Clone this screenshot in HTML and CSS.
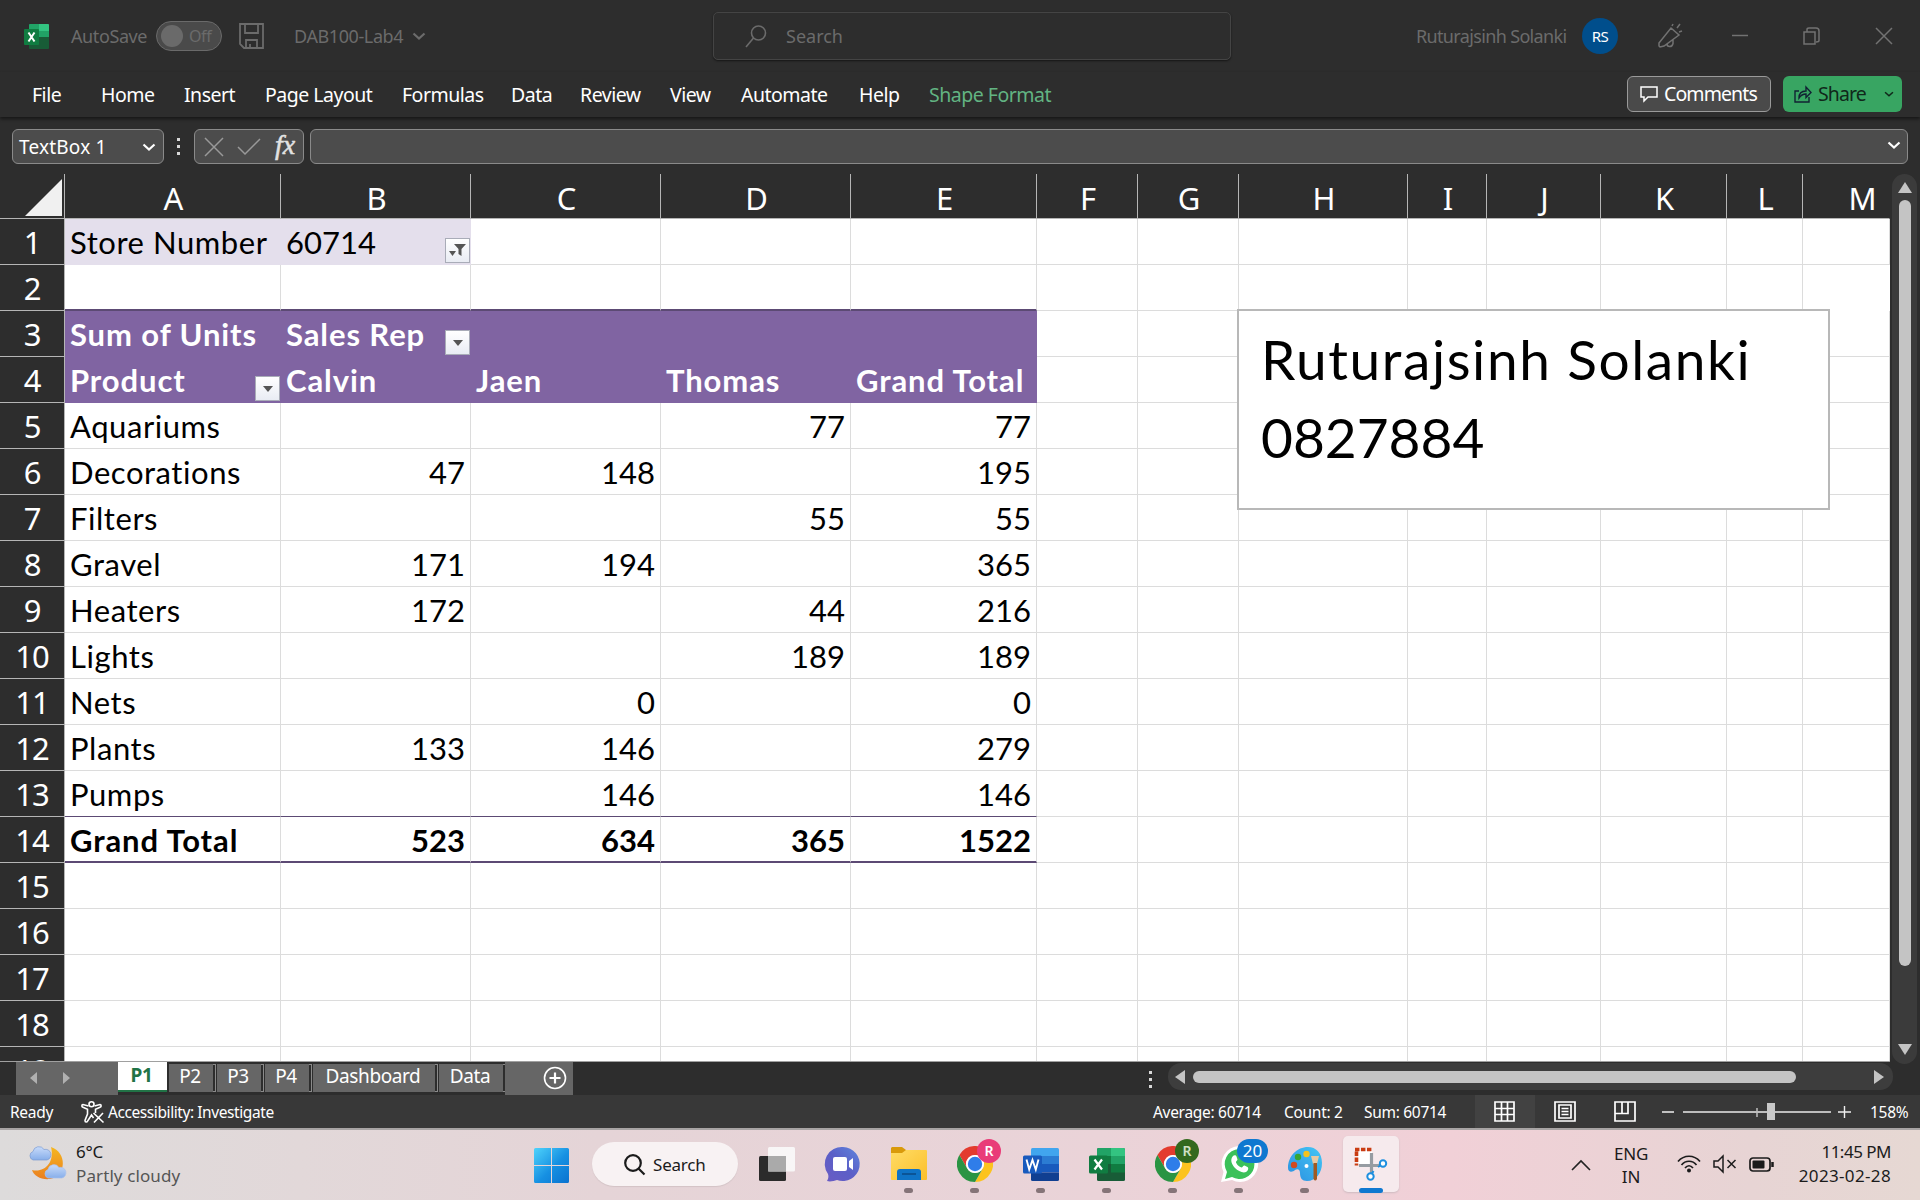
FILE: index.html
```html
<!DOCTYPE html>
<html lang="en">
<head>
<meta charset="utf-8">
<title>DAB100-Lab4 - Excel</title>
<link rel="stylesheet" href="styles.css">
</head>
<body>
<svg width="0" height="0" class="defs" aria-hidden="true">
  <defs>
    <linearGradient id="win" x1="0" y1="0" x2="1" y2="1"><stop offset="0" stop-color="#4fd3fb"/><stop offset=".55" stop-color="#1690e2"/><stop offset="1" stop-color="#0a72cf"/></linearGradient>
    <linearGradient id="moon" x1="0" y1="0" x2="0" y2="1"><stop offset="0" stop-color="#f5b71f"/><stop offset="1" stop-color="#ea7f22"/></linearGradient>
    <linearGradient id="cloud" x1="0" y1="0" x2="0" y2="1"><stop offset="0" stop-color="#c9dcfa"/><stop offset="1" stop-color="#87aeea"/></linearGradient>
    <linearGradient id="chat" x1="1" y1="0" x2="0" y2="1"><stop offset="0" stop-color="#5f86dd"/><stop offset=".5" stop-color="#5b5fc7"/><stop offset="1" stop-color="#6a5cc4"/></linearGradient>
    <linearGradient id="folder" x1="0" y1="0" x2="1" y2="1"><stop offset="0" stop-color="#ffdc66"/><stop offset="1" stop-color="#fbbf2a"/></linearGradient>
    <linearGradient id="paint" x1="0" y1="1" x2="1" y2="0"><stop offset="0" stop-color="#2a8fe0"/><stop offset="1" stop-color="#45c6f5"/></linearGradient>
    <symbol id="chrome" viewBox="0 0 36 36">
      <path d="M2.4 9A18 18 0 0 1 33.6 9H18a9 9 0 0 0-7.8 13.5z" fill="#e33b2e"/>
      <path d="M33.6 9A18 18 0 0 1 18 36l7.8-13.5A9 9 0 0 0 18 9z" fill="#fcc31e"/>
      <path d="M18 36A18 18 0 0 1 2.4 9l7.8 13.5A9 9 0 0 0 25.8 22.500z" fill="#2a9443"/>
      <circle cx="18" cy="18" r="9" fill="#fff"/><circle cx="18" cy="18" r="7.200" fill="#2f7de9"/>
    </symbol>
    <symbol id="chev" viewBox="0 0 14 8"><path d="M1.500 1.500 7 6.500l5.500-5" fill="none" stroke="currentColor" stroke-width="2.200"/></symbol>
  </defs>
</svg>

<header class="titlebar">
  <svg width="25" height="25" viewBox="0 0 25 25"><rect x="5" width="20" height="25" rx="1" fill="#185c37"/><path d="M5 1a1 1 0 0 1 1-1h9v12H5z" fill="#21a366"/><path d="M15 0h9a1 1 0 0 1 1 1v6H15z" fill="#33c481"/><path d="M15 7h10v6H15z" fill="#21a366"/><path d="M5 7h10v6H5z" fill="#107c41"/><rect y="5" width="15" height="16" rx="1" fill="#107c41"/><path d="m4.500 8.500 6 9m0-9-6 9" stroke="#fff" stroke-width="2"/></svg>
  <span class="autosave t">AutoSave</span>
  <div class="toggle"><i></i><span class="t">Off</span></div>
  <svg class="save" width="25" height="26" viewBox="0 0 25 26" fill="none" stroke="#6b6b6b" stroke-width="1.800"><path d="M1 1h23v24H5l-4-4zM6 1v9h13V1M7 25v-8h11v8M11 21v4"/></svg>
  <div class="doc"><span class="t">DAB100-Lab4</span><svg width="14" height="8"><use href="#chev"/></svg></div>
  <div class="search"><svg width="21" height="23" viewBox="0 0 21 23" fill="none" stroke="#6b6b6b" stroke-width="1.600"><circle cx="13.500" cy="8" r="7"/><path d="M8.500 13 1 22"/></svg><span class="t">Search</span></div>
  <div class="account"><span class="t">Ruturajsinh Solanki</span><b class="avatar">RS</b></div>
  <svg class="pen" width="26" height="26" viewBox="0 0 26 26" fill="none" stroke="#727272" stroke-width="1.500"><path d="m2 20 12-15 8 7-15 11-4 1-1-1zM10 21c0 3 5 4 6-.5V16M15 3l1-2M20 5l3-4M22 9l3-1"/></svg>
  <div class="winctl">
    <svg width="18" height="18" viewBox="0 0 18 18"><path d="M1 8.500h16"/></svg>
    <svg width="18" height="18" viewBox="0 0 18 18"><path d="M1 5h11v12H1zM4 5V2.500Q4 1 6 1h7q3 0 3 3v9.500q0 1.500-3 1.500"/></svg>
    <svg width="18" height="18" viewBox="0 0 18 18"><path d="m1 1 16 16M17 1 1 17"/></svg>
  </div>
</header>

<nav class="menu">
  <div class="tabs"><a>File</a><a>Home</a><a>Insert</a><a>Page Layout</a><a>Formulas</a><a>Data</a><a>Review</a><a>View</a><a>Automate</a><a>Help</a><a class="ctx">Shape Format</a></div>
  <button class="btn comments"><svg width="18" height="18" viewBox="0 0 18 18" fill="none" stroke="#fff" stroke-width="1.500"><path d="M1 2h16v10H8l-4 4v-4H1z"/></svg><span class="t">Comments</span></button>
  <button class="btn share"><svg width="18" height="18" viewBox="0 0 18 18" fill="none" stroke="#123" stroke-width="1.400"><path d="M5 6H1v11h14v-5M5 13c0-5 3-7 7-7V2l5 5.500-5 5V9c-3 0-5 1-7 4z"/></svg><span class="t">Share</span><svg width="10" height="6"><use href="#chev"/></svg></button>
</nav>

<div class="formula">
  <div class="namebox"><span class="t">TextBox 1</span><svg width="14" height="8"><use href="#chev"/></svg></div>
  <div class="dots"><i></i><i></i><i></i></div>
  <div class="fxbox"><svg width="20" height="18" viewBox="0 0 20 18"><path d="m1 0 18 18M19 0 1 18"/></svg><svg width="24" height="17" viewBox="0 0 24 17"><path d="m1 9 7 7L23 1"/></svg><em>fx</em></div>
  <div class="input"><svg width="14" height="8"><use href="#chev"/></svg></div>
</div>

<main class="work">
  <div class="sheet">
  <table>
    <colgroup><col class="w-row"><col class="w-a"><col class="w-b"><col class="w-b"><col class="w-b"><col class="w-e"><col class="w-f"><col class="w-f"><col class="w-h"><col class="w-i"><col class="w-j"><col class="w-k"><col class="w-l"><col class="w-m"></colgroup>
    <tr class="heads"><th class="corner"><svg width="37" height="37" viewBox="0 0 37 37"><path d="M37 0v37H0z" fill="#f0f0f0"/></svg><th>A<th>B<th>C<th>D<th>E<th>F<th>G<th>H<th>I<th>J<th>K<th>L<th class="last">M</tr>
    <tr><th>1<td class="lav"><span class="t">Store Number</span><td class="lav"><div class="f">60714<button class="drop"><svg width="17" height="13" viewBox="0 0 17 13"><path d="M5 0h12l-4.500 5v7l-3-2V5z" fill="#555"/><path d="M0 7h7l-3.500 5z" fill="#555"/></svg></button></div><td><td><td><td><td><td><td><td><td><td><td></tr>
    <tr class="over"><th>2<td><td><td><td><td><td><td><td><td><td><td><td></tr>
    <tr class="pur"><th>3<td><span class="t">Sum of Units</span><td><div class="f"><span class="t">Sales Rep</span><button class="drop"><svg width="10" height="6" viewBox="0 0 10 6"><path d="M0 0h10L5 6z" fill="#555"/></svg></button></div><td><td><td><td><td><td><td><td><td><td><td></tr>
    <tr class="pur"><th>4<td><div class="f"><span class="t">Product</span><button class="drop"><svg width="10" height="6" viewBox="0 0 10 6"><path d="M0 0h10L5 6z" fill="#555"/></svg></button></div><td><span class="t">Calvin</span><td><span class="t">Jaen</span><td><span class="t">Thomas</span><td><span class="t">Grand Total</span><td><td><td><td><td><td><td><td></tr>
    <tr><th>5<td><span class="t">Aquariums</span><td><td><td class="n">77<td class="n">77<td><td><td><td><td><td><td><td></tr>
    <tr><th>6<td><span class="t">Decorations</span><td class="n">47<td class="n">148<td><td class="n">195<td><td><td><td><td><td><td><td></tr>
    <tr><th>7<td><span class="t">Filters</span><td><td><td class="n">55<td class="n">55<td><td><td><td><td><td><td><td></tr>
    <tr><th>8<td><span class="t">Gravel</span><td class="n">171<td class="n">194<td><td class="n">365<td><td><td><td><td><td><td><td></tr>
    <tr><th>9<td><span class="t">Heaters</span><td class="n">172<td><td class="n">44<td class="n">216<td><td><td><td><td><td><td><td></tr>
    <tr><th>10<td><span class="t">Lights</span><td><td><td class="n">189<td class="n">189<td><td><td><td><td><td><td><td></tr>
    <tr><th>11<td><span class="t">Nets</span><td><td class="n">0<td><td class="n">0<td><td><td><td><td><td><td><td></tr>
    <tr><th>12<td><span class="t">Plants</span><td class="n">133<td class="n">146<td><td class="n">279<td><td><td><td><td><td><td><td></tr>
    <tr class="thin"><th>13<td><span class="t">Pumps</span><td><td class="n">146<td><td class="n">146<td><td><td><td><td><td><td><td></tr>
    <tr class="over total"><th>14<td><span class="t">Grand Total</span><td class="n">523<td class="n">634<td class="n">365<td class="n">1522<td><td><td><td><td><td><td><td></tr>
    <tr><th>15<td><td><td><td><td><td><td><td><td><td><td><td><td></tr>
    <tr><th>16<td><td><td><td><td><td><td><td><td><td><td><td><td></tr>
    <tr><th>17<td><td><td><td><td><td><td><td><td><td><td><td><td></tr>
    <tr><th>18<td><td><td><td><td><td><td><td><td><td><td><td><td></tr>
    <tr><th>19<td><td><td><td><td><td><td><td><td><td><td><td><td></tr>
  </table>
  <div class="textbox"><span class="t">Ruturajsinh Solanki</span><br>0827884</div>
  </div>
  <div class="vscroll"><svg width="14" height="11" viewBox="0 0 14 11"><path d="M7 0l7 11H0z" fill="#c4c4c4"/></svg><i></i><svg width="14" height="11" viewBox="0 0 14 11"><path d="M7 11l7-11H0z" fill="#c4c4c4"/></svg></div>
</main>

<div class="sheetbar">
  <div class="nav"><svg width="40" height="12" viewBox="0 0 40 12" fill="#b0b0b0"><path d="M7 0v12L0 6zM33 0v12l7-6z"/></svg></div>
  <a class="on"><span class="t">P1</span></a><a class="s"><span class="t">P2</span></a><a class="s"><span class="t">P3</span></a><a class="s"><span class="t">P4</span></a><a class="s dash"><span class="t">Dashboard</span></a><a class="s data"><span class="t">Data</span></a>
  <div class="new"><svg width="24" height="24" viewBox="0 0 24 24" fill="none" stroke="#fff" stroke-width="1.600"><circle cx="12" cy="12" r="10.500"/><path stroke-width="2.200" d="M12 6.500v11M6.500 12h11"/></svg></div>
  <div class="dots hd"><i></i><i></i><i></i></div>
  <div class="hscroll"><svg width="10" height="14" viewBox="0 0 10 14"><path d="M10 0v14L0 7z" fill="#c4c4c4"/></svg><i></i><svg width="10" height="14" viewBox="0 0 10 14"><path d="M0 0v14l10-7z" fill="#c4c4c4"/></svg></div>
</div>

<footer class="status">
  <span class="ready t">Ready</span>
  <svg class="acc" width="24" height="22" viewBox="0 0 24 22" fill="none" stroke="#fff" stroke-width="1.600"><circle cx="10.500" cy="3.200" r="2.500"/><path d="M7.500 5 2 3.500C0 4 1 6 2 6.200l4.500 2V13L4 19.500c0 2 2 2 2.600.5L10.500 14l2 3M13.500 5 19 3.500c2 .5 1 2.500 0 2.700l-4.500 2V12M12.500 12l10 9.500M22 12l-9 9.500"/></svg>
  <span class="acct t">Accessibility: Investigate</span>
  <span class="avg t">Average: 60714</span><span class="cnt t">Count: 2</span><span class="sum t">Sum: 60714</span>
  <div class="views">
    <b><svg width="21" height="21" viewBox="0 0 21 21"><path d="M1 1h19v19H1zM1 7.500h19M1 13.500h19M7.500 1v19M13.500 1v19"/></svg></b>
    <b><svg width="22" height="21" viewBox="0 0 22 21"><path d="M1 1h20v19H1zM5 4h12v13H5zM7.500 7.500h7M7.500 10.500h7M7.500 13.500h7"/></svg></b>
    <b><svg width="22" height="21" viewBox="0 0 22 21"><path d="M1 1h20v19H1zM1 12.500h13V1M8 1v11"/></svg></b>
  </div>
  <svg class="zoom" width="190" height="20" viewBox="0 0 190 20"><path d="M0 10h12M176 10h13M182.500 4v12" stroke="#eee" stroke-width="1.400"/><path d="M21 10h148" stroke="#bdbdbd" stroke-width="2"/><path d="M95 6v9" stroke="#bdbdbd" stroke-width="1.500"/><rect x="105" y="1" width="8" height="17" fill="#c8c8c8"/></svg>
  <span class="t">158%</span>
</footer>

<div class="taskbar">
  <svg class="wicon" width="38" height="34" viewBox="0 0 38 34"><path d="M23 1c16 5 16 29-1 32C13 34 6 30 4 24c12 3 23-7 19-23z" fill="url(#moon)"/><path d="M5 14a4.500 4.500 0 0 1 0-8.500A6 6 0 0 1 16 3.500 5 5 0 0 1 19 14z" fill="url(#cloud)" stroke="#7c9bd0" stroke-width=".7"/><path d="M20 32a4.500 4.500 0 0 1 0-8.500A6 6 0 0 1 31 21.500 5 5 0 0 1 34 32z" fill="url(#cloud)" stroke="#a8c0ee" stroke-width=".7"/></svg>
  <div class="weather"><span class="t">6°C</span><span class="t cl">Partly cloudy</span></div>
  <svg width="35" height="35" viewBox="0 0 35 35"><path d="M1.500 0H17v17H0V1.500A1.500 1.500 0 0 1 1.500 0zM18 0h15.500A1.500 1.500 0 0 1 35 1.500V17H18zM0 18h17v17H1.500A1.500 1.500 0 0 1 0 33.500zM18 18h17v15.500a1.500 1.500 0 0 1-1.500 1.500H18z" fill="url(#win)"/></svg>
  <div class="pill"><svg width="21" height="21" viewBox="0 0 21 21" fill="none" stroke="#1b1b1b" stroke-width="2.200"><circle cx="9" cy="9" r="7.800"/><path d="m14.500 14.500 6 6"/></svg><span class="t">Search</span></div>
  <div class="apps">
    <div class="app"><svg width="36" height="34" viewBox="0 0 36 34"><rect y="9" width="27" height="25" rx="1.500" fill="#2b2b2b"/><rect x="9" width="27" height="24.500" rx="1.500" fill="#fafafa" fill-opacity=".88"/><path d="M9 9h18v15.500H9z" fill="#aaa"/></svg></div>
    <div class="app"><svg width="34" height="34" viewBox="0 0 34 34"><path d="M17 0a17 17 0 1 1-6 33c-3 1-7 2-10 1 1-2 2-4 1-7A17 17 0 0 1 17 0z" fill="url(#chat)"/><rect x="7" y="10" width="14" height="14" rx="2" fill="#fff"/><path d="m23 14 4-3v12l-4-3z" fill="#fff"/></svg></div>
    <div class="app run"><svg width="36" height="34" viewBox="0 0 36 34"><path d="M1 0h10l4 3v4H0V1z" fill="#d99a0b"/><path d="M0 6h11l4-3h20a1 1 0 0 1 1 1v28a1 1 0 0 1-1 1H1a1 1 0 0 1-1-1z" fill="url(#folder)"/><path d="M6 33v-8a3 3 0 0 1 3-3h18a3 3 0 0 1 3 3v8z" fill="#0f73c6"/><path d="M11 27h14" stroke="#0b4a86" stroke-width="1.500"/></svg></div>
    <div class="app run"><svg width="36" height="36"><use href="#chrome"/></svg><b class="badge pink">R</b></div>
    <div class="app run"><svg width="36" height="33" viewBox="0 0 36 33"><path d="M8 1.500A1.500 1.500 0 0 1 9.500 0h25A1.500 1.500 0 0 1 36 1.500V8H8z" fill="#41a5ee"/><path d="M8 8h28v8H8z" fill="#2b7cd3"/><path d="M8 16h28v8.500H8z" fill="#185abd"/><path d="M8 24.500h28v7a1.500 1.500 0 0 1-1.500 1.500h-25A1.500 1.500 0 0 1 8 31.500z" fill="#103f91"/><rect y="7.500" width="19" height="18" rx="1.500" fill="#185abd"/><path d="m3.500 11.500 2.700 10 3.300-9.500 3.300 9.500 2.700-10" fill="none" stroke="#fff" stroke-width="1.900"/></svg></div>
    <div class="app run"><svg width="36" height="33" viewBox="0 0 36 33"><rect x="8" width="28" height="33" rx="1.500" fill="#185c37"/><path d="M8 1.500A1.500 1.500 0 0 1 9.500 0H22v8H8z" fill="#21a366"/><path d="M22 0h12.500A1.500 1.500 0 0 1 36 1.500V8H22z" fill="#33c481"/><path d="M8 8h14v8H8z" fill="#107c41"/><path d="M22 8h14v8H22z" fill="#21a366"/><path d="M22 16h14v8.500H22z" fill="#107c41"/><rect y="7.500" width="19" height="18" rx="1.500" fill="#107c41"/><path d="m5.500 11.500 7.500 10m0-10-7.500 10" stroke="#fff" stroke-width="2.200"/></svg></div>
    <div class="app run"><svg width="36" height="36"><use href="#chrome"/></svg><b class="badge green">R</b></div>
    <div class="app run"><svg width="36" height="36" viewBox="0 0 36 36"><path d="M18 0a18 18 0 1 1-7 34L0 36l2.500-10A18 18 0 0 1 18 0z" fill="#fff"/><path d="M18 3a15 15 0 1 1-7 28l-7 2 2-7A15 15 0 0 1 18 3z" fill="#3bc159"/><path d="M12 10c1-1 3-1 3.500.5l1 3c0 1-2 2-1.500 3 1.500 3 3 4 5.500 5 1 0 2-2.500 3-2l3 1.500c1.500 1 .5 4-1.500 5-3 1.500-8-1-11-4-3-3.500-5.500-8-2-12z" fill="#fff"/></svg><b class="badge count">20</b></div>
    <div class="app run"><svg width="34" height="34" viewBox="0 0 34 34"><path d="M20 0C9 0 0 9 0 21c0 5 5 4 7 2 3-2 5 0 5 3 0 5 2 8 7 8 9 0 15-8 15-18C34 6 28 0 20 0z" fill="url(#paint)"/><circle cx="10" cy="10" r="3.200" fill="#35a532"/><circle cx="18.500" cy="7" r="3.200" fill="#f4c21d"/><circle cx="6" cy="18" r="3.200" fill="#d14a22"/><circle cx="18.500" cy="19" r="2" fill="#fff"/><path d="M23 9h8l-2 8h-4z" fill="#e9c9a2"/><path d="M25.500 16h3.500v16q-1.700 3-3.500 0z" fill="#a05a22"/></svg></div>
    <div class="app run cur"><svg width="34" height="34" viewBox="0 0 34 34"><path d="M4 4h14v14H4z" fill="#fff"/><path d="M17.500 6v21M5 18.500h21" stroke="#969ca2" stroke-width="3.200"/><path d="M1 2.500h17M2.500 4.500v14" stroke="#c93c12" stroke-width="3.600" stroke-dasharray="4.400 1.600" fill="none"/><circle cx="29" cy="16.500" r="3.200" fill="#fff" stroke="#1d8fdf" stroke-width="2"/><circle cx="16.500" cy="29.500" r="3.200" fill="#fff" stroke="#1d8fdf" stroke-width="2"/><path d="m24 20 2.500-1.500M19.500 24l-1.500 2.500" stroke="#1d8fdf" stroke-width="2"/></svg></div>
  </div>
  <svg class="up" width="20" height="12" viewBox="0 0 20 12" fill="none" stroke="#222" stroke-width="1.600"><path d="m1 11 9-9 9 9"/></svg>
  <div class="lang"><span class="t">ENG</span><span class="t">IN</span></div>
  <div class="tray">
    <svg width="24" height="18" viewBox="0 0 24 18" fill="none" stroke="#1b1b1b" stroke-width="1.700"><path d="M1 6.500C7-.5 17-.5 23 6.500M4.500 10c4-5 11-5 15 0M8 13c2.500-3 5.500-3 8 0"/><circle cx="12" cy="15.500" r="2" fill="#1b1b1b" stroke="none"/></svg>
    <svg width="24" height="18" viewBox="0 0 24 18" fill="none" stroke="#1b1b1b" stroke-width="1.500"><path d="M1 6v6h4l5 5V1L5 6zM14.500 5l8 8M22.500 5l-8 8"/></svg>
    <svg width="25" height="15" viewBox="0 0 25 15" fill="none" stroke="#1b1b1b" stroke-width="1.700"><rect x="1" y="1" width="20" height="13" rx="3"/><rect x="3.500" y="3.500" width="12" height="8" rx="1" fill="#1b1b1b" stroke="none"/><path d="M23.500 5v5" stroke-width="2.500"/></svg>
  </div>
  <div class="clock"><span class="t">11:45 PM</span><span class="t date">2023-02-28</span></div>
</div>
</body>
</html>
```
FILE: styles.css
```css
* { box-sizing: border-box; }
body { margin: 0; width: 1920px; height: 1200px; overflow: hidden; display: flex; flex-direction: column; background: #2d2d2d; color: #fff; font-family: "Noto Sans", "Open Sans", sans-serif; }
svg { display: block; flex: none; overflow: visible; }
button { font: inherit; color: inherit; padding: 0; border: 0; background: none; }
.defs { position: absolute; }
.t { white-space: nowrap; }

/* title bar */
.titlebar { height: 72px; flex: none; display: flex; align-items: center; color: #6b6b6b; font-size: 18px; letter-spacing: -.4px; padding-left: 24px; }
.titlebar .autosave { margin-left: 22px; width: 85px; }
.toggle { width: 66px; height: 30px; border: 1px solid #6a6a6a; border-radius: 15px; background: #4a4a4a; display: flex; align-items: center; padding-left: 4px; gap: 6px; font-size: 16px; }
.toggle i { width: 22px; height: 22px; border-radius: 50%; background: #6a6a6a; }
.titlebar .save { margin-left: 17px; }
.doc { display: flex; align-items: center; gap: 9px; width: 162px; margin-left: 30px; }
.search { margin-left: 257px; width: 518px; height: 48px; border: 1px solid #444; border-radius: 5px; box-shadow: 0 1px 2px #161616; display: flex; align-items: center; gap: 20px; padding-left: 31px; letter-spacing: 0; }
.account { display: flex; align-items: center; width: 202px; margin-left: 185px; justify-content: space-between; letter-spacing: -.65px; }
.avatar { width: 36px; height: 36px; border-radius: 50%; background: #004e8c; color: #fff; font-size: 15px; font-weight: 400; line-height: 36px; text-align: center; }
.pen { margin-left: 39px; }
.winctl { display: flex; gap: 54px; margin-left: 48px; fill: none; stroke: #727272; stroke-width: 1.5; }

/* ribbon tabs */
.menu { height: 45px; flex: none; display: flex; align-items: center; padding-left: 32px; box-shadow: 0 2px 3px #171717; font-size: 19.500px; }
.tabs { display: grid; grid-template-columns: 69px 83px 81px 137px 109px 69px 90px 71px 118px 70px 698px; letter-spacing: -.5px; white-space: nowrap; }
.ctx { color: #62b482; }
.btn { display: flex; align-items: center; height: 36px; border-radius: 6px; margin-top: -2px; letter-spacing: -.9px; }
.comments { width: 144px; background: #4a4a4a; border: 1px solid #9a9a9a; padding-left: 12px; gap: 6px; }
.share { width: 119px; margin-left: 12px; background: #38a562; color: #10281a; padding-left: 11px; gap: 6px; }
.share svg:last-child { margin-left: 12px; }

/* formula bar */
.formula { height: 57px; flex: none; display: flex; align-items: center; padding: 2px 12px 0 12px; font-size: 19px; }
.namebox, .fxbox, .input { height: 35px; border: 1px solid #8a8a8a; border-radius: 6px; background: #4c4c4c; display: flex; align-items: center; }
.namebox { width: 152px; justify-content: space-between; padding: 0 7px 0 6px; letter-spacing: .2px; }
.dots { display: grid; gap: 4px; margin: 0 14px 0 13px; }
.dots i { width: 3px; height: 3px; background: #d8d8d8; }
.fxbox { width: 110px; margin-right: 6px; padding-left: 9px; fill: none; stroke: #999; stroke-width: 1.5; }
.fxbox svg + svg { margin-left: 13px; }
.fxbox em { font: italic 28px/30px "Liberation Serif", serif; margin-left: 14px; color: #e2e2e2; -webkit-text-stroke: .5px #e2e2e2; margin-top: -4px; letter-spacing: 0; }
.input { flex: 1; justify-content: flex-end; padding-right: 6px; }
.input svg { margin-top: -4px; }

/* worksheet */
.work { height: 888px; flex: none; display: flex; }
.sheet { position: relative; width: 1890px; height: 888px; overflow: hidden; border-bottom: 1px solid #a0a0a0; }
table { border-collapse: separate; border-spacing: 0; table-layout: fixed; width: 1890px; background: #fff; font-variant-ligatures: none; }
.w-row { width: 65px; } .w-a { width: 216px; } .w-b { width: 190px; } .w-e { width: 186px; } .w-f { width: 101px; } .w-h { width: 169px; } .w-i { width: 79px; } .w-j { width: 114px; } .w-k { width: 126px; } .w-l { width: 76px; } .w-m { width: 87px; }
tr { height: 46px; }
th { background: #2d2d2d; font-weight: 400; font-size: 31px; line-height: 40px; padding: 1px 0 0; height: 46px; border-right: 1px solid #b5b5b5; border-bottom: 1px solid #b5b5b5; overflow: hidden; letter-spacing: -1px; }
td { height: 46px; padding: 3px 0 0 5px; border-right: 1px solid #dcdcdc; border-bottom: 1px solid #dcdcdc; color: #000; font: 31px/40px Lato, "Noto Sans", sans-serif; vertical-align: top; white-space: nowrap; }
td .t { letter-spacing: .55px; }
.heads th { height: 45px; padding: 4px 0 0 1px; }
.heads { height: 45px; }
.heads .corner { padding: 0 0 2px 25px; vertical-align: bottom; }
.heads .last { padding-left: 32px; border-right-color: #2d2d2d; }
.n { text-align: right; padding-right: 5px; }
td.lav { background: #e4dfec; border-color: #e4dfec; }
.f { display: flex; height: 41px; justify-content: space-between; }
.drop { width: 25px; height: 25px; margin-top: 16px; border: 1px solid #a9acb8; background: linear-gradient(#fff, #e9ecf4); display: flex; align-items: center; justify-content: center; }
.over td:nth-child(-n+6) { border-bottom: 2px solid #5c4a74; }
.thin td:nth-child(-n+6) { border-bottom-color: #5c4a74; }
.pur td:nth-child(-n+6) { background: #8064a2; border-color: #8064a2; color: #fff; font-weight: 700; }
.total td { font-weight: 700; }
.pur .t, .total .t { letter-spacing: .9px; }
/* floats above the cells */
.textbox { position: absolute; left: 1237px; top: 135px; width: 593px; height: 201px; border: 2px solid #b8b8b8; background: #fff; color: #000; padding: 9px 0 0 22px; font: 55px/78px Lato, "Noto Sans", sans-serif; }
.textbox .t { letter-spacing: 1.6px; }
.vscroll { width: 25px; height: 890px; margin-left: 2px; border-radius: 13px; background: #3b3b3b; display: flex; flex-direction: column; align-items: center; padding: 8px 0 9px; }
.vscroll i { width: 12px; height: 766px; border-radius: 6px; background: #c4c4c4; margin: 7px 0 auto; }

/* sheet tabs */
.sheetbar { height: 33px; flex: none; display: flex; padding-left: 16px; font-size: 19px; letter-spacing: -.4px; }
.sheetbar a { display: flex; justify-content: center; line-height: 25px; padding-right: 2px; }
.nav { width: 102px; background: #666; padding: 10px 0 0 14px; }
.sheetbar .on { width: 49px; height: 31px; margin-top: -1px; background: #fff; color: #217346; font-weight: 700; border-bottom: 2px solid #217346; line-height: 28px; }
.s { width: 44px; height: 28px; margin: 2px 4px 0 0; background: #666; box-shadow: 3px 0 0 -1px #2d2d2d, 3px 0 0 0 #8a8a8a; }
.on + .s { margin-left: 2px; }
.dash { width: 122px; } .sheetbar .data { width: 64px; margin-right: 2px; }
.new { width: 68px; background: #666; padding: 4px 0 0 38px; }
.hd { margin: 9px 16px 0 576px; align-content: start; }
.hscroll { width: 725px; height: 27px; margin-top: 1px; border-radius: 13px; background: #3d3d3d; display: flex; align-items: center; padding: 0 9px 0 7px; }
.hscroll i { width: 603px; height: 12px; border-radius: 6px; background: #c4c4c4; margin: 0 auto 0 8px; }

/* status bar */
.status { height: 35px; flex: none; background: #383838; border-bottom: 2px solid #a8a4a4; display: flex; align-items: center; font-size: 15.500px; padding-left: 10px; letter-spacing: -.3px; }
.ready { width: 71px; } .acc { margin-right: 3px; }
.acct { width: 1045px; letter-spacing: -.42px; } .avg { width: 131px; } .cnt { width: 80px; } .sum { width: 111px; }
.views { display: flex; height: 33px; fill: none; stroke: #fff; stroke-width: 1.700; }
.views b { width: 60px; display: flex; align-items: center; justify-content: center; }
.views b:first-child { background: #424242; padding-right: 2px; }
.zoom { margin-left: 7px; margin-right: 18px; }

/* taskbar */
.taskbar { height: 70px; flex: none; display: flex; align-items: center; color: #1b1b1b; font-size: 17px; letter-spacing: -.2px; padding-left: 28px; background: linear-gradient(90deg, #dddbdb 0, #e2d8d9 300px, #e5d4d7 600px, #ead3d8 1100px, #f1d0d7 1450px, #e7d4d4 1750px, #e6d8d3 100%); }
.wicon { margin-right: 10px; margin-top: -5px; }
.weather { display: grid; line-height: 24px; width: 458px; margin-top: -2px; }
.cl { color: #555; letter-spacing: .1px; }
.pill { width: 146px; height: 44px; margin: -2px 6px 0 23px; border-radius: 22px; background: #f8f2f3; box-shadow: 0 1px 1px #d3c3c6; display: flex; align-items: center; padding-left: 32px; gap: 8px; }
.apps { display: flex; }
.app { position: relative; width: 66px; height: 70px; display: flex; align-items: center; justify-content: center; padding-bottom: 2px; }
.run::after { content: ""; position: absolute; left: 28px; top: 58px; width: 9px; height: 5px; border-radius: 3px; background: #857478; }
.cur::before { content: ""; position: absolute; left: 5px; top: 6px; width: 56px; height: 56px; border-radius: 5px; background: #f6eaed; box-shadow: 0 1px 2px #cdbac0; }
.cur svg { position: relative; }
.cur::after { left: 21px; width: 24px; background: #0f78d0; }
.badge { position: absolute; left: 35px; top: 9px; width: 24px; height: 24px; border-radius: 12px; font-size: 14px; line-height: 24px; text-align: center; color: #fff; font-weight: 600; letter-spacing: 0; }
.pink { background: #e93c78; } .green { background: #33691e; color: #cfe0c4; }
.count { left: 31px; width: 31px; background: #0f78d0; font-size: 17px; font-weight: 400; }
.up { margin-left: 167px; }
.lang { display: grid; text-align: center; width: 40px; line-height: 23px; margin-left: 20px; }
.tray { display: flex; align-items: center; gap: 12px; margin: -2px 0 0 26px; }
.clock { display: grid; text-align: right; line-height: 24px; margin: -2px 29px 0 auto; letter-spacing: -.5px; }
.date { letter-spacing: .35px; }
```
